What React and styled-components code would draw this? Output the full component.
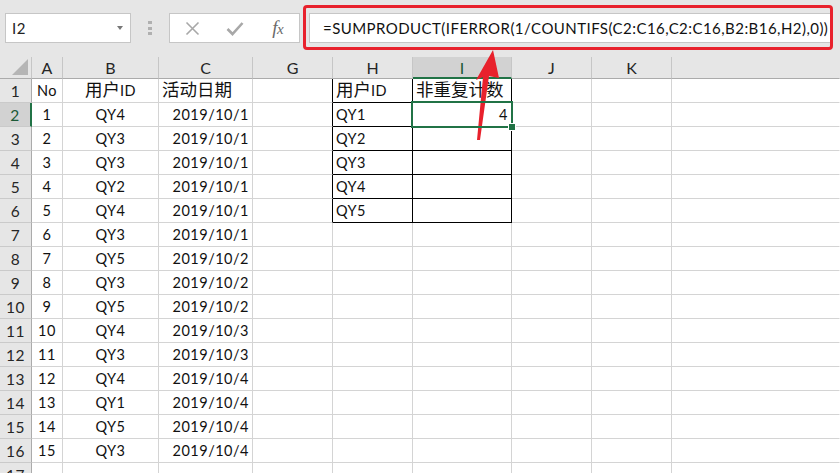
import React from "react";
import styled, { createGlobalStyle } from "styled-components";

const Global = createGlobalStyle`
  html, body { margin: 0; padding: 0; background: #ffffff; }
  body { overflow: hidden; }
`;

const LATIN = `Lato, "Noto Sans CJK SC", sans-serif`;
const GREEN = "#217346";

const Shell = styled.div`
  position: relative;
  width: 840px;
  height: 473px;
  overflow: hidden;
  background: #e6e6e6;
  font-family: ${LATIN};
  color: #000;
`;

const Toolbar = styled.div`
  display: flex;
  align-items: flex-start;
  height: 57px;
  box-sizing: border-box;
  padding-left: 5px;
`;

const NameBox = styled.div`
  margin-top: 13px;
  width: 126px;
  height: 30px;
  box-sizing: border-box;
  background: #fff;
  border: 1px solid #c6c6c6;
  display: flex;
  align-items: center;
  justify-content: space-between;
  padding: 0 7px 0 6px;
  font-size: 15px;
  letter-spacing: 0.6px;
  color: #222;
`;

const Caret = styled.span`
  width: 0;
  height: 0;
  border-left: 3.5px solid transparent;
  border-right: 3.5px solid transparent;
  border-top: 4px solid #777;
`;

const Grip = styled.div`
  margin: 21px 0 0 17px;
  display: flex;
  flex-direction: column;
  gap: 2.5px;
`;

const GripDot = styled.span`
  width: 3.5px;
  height: 3px;
  background: #b0b0b0;
`;

const ButtonBox = styled.div`
  margin: 13px 0 0 17.5px;
  width: 131px;
  height: 30px;
  box-sizing: border-box;
  background: #fff;
  border: 1px solid #c6c6c6;
  display: flex;
  align-items: center;
  padding-left: 1px;
`;

const ToolButton = styled.div`
  width: 45px;
  height: 28px;
  display: flex;
  align-items: center;
  justify-content: center;
`;

const Fx = styled.span`
  font-family: "Liberation Serif", "DejaVu Serif", serif;
  font-style: italic;
  color: #6a6a6a;
  font-size: 19px;
  letter-spacing: -0.5px;
  & > small {
    font-size: 15px;
  }
`;

const FormulaFrame = styled.div`
  margin: 5px 0 0 3px;
  width: 530px;
  height: 45px;
  box-sizing: border-box;
  border: 3px solid #e8222d;
  border-radius: 4px;
  padding: 5px 0 0 3px;
  display: flex;
  align-items: flex-start;
`;

const FormulaInput = styled.div`
  flex: 1;
  height: 30px;
  box-sizing: border-box;
  background: #fff;
  border: 1px solid #c6c6c6;
  border-right: none;
  padding-left: 13px;
  font-size: 15px;
  line-height: 28px;
  letter-spacing: 0.45px;
  color: #111;
  white-space: nowrap;
  overflow: hidden;
`;

const Sheet = styled.div`
  display: grid;
  grid-template-columns: 32px 31px 96px 94px 80px 80px 99px 80px 80px 1fr;
  grid-template-rows: 22px repeat(17, 24px);
  background: #fff;
`;

const Corner = styled.div`
  position: relative;
  background: #e6e6e6;
  border-right: 1px solid #c6c6c6;
  border-bottom: 1px solid #ababab;
`;

const CornerTri = styled.span`
  position: absolute;
  right: 3px;
  bottom: 3px;
  width: 0;
  height: 0;
  border-left: 16px solid transparent;
  border-bottom: 16px solid #b5b5b5;
`;

const ColHead = styled.div`
  background: ${(p) => (p.$sel ? "#d2d2d2" : "#e6e6e6")};
  border-right: 1px solid ${(p) => (p.$last ? "transparent" : "#c6c6c6")};
  border-bottom: ${(p) => (p.$sel ? `2px solid ${GREEN}` : "1px solid #ababab")};
  box-sizing: border-box;
  text-align: center;
  font-size: 16px;
  line-height: 21px;
  color: ${(p) => (p.$sel ? "#1c5a37" : "#262626")};
`;

const RowHead = styled.div`
  background: ${(p) => (p.$sel ? "#d2d2d2" : "#e6e6e6")};
  border-right: ${(p) => (p.$sel ? `2px solid ${GREEN}` : "1px solid #ababab")};
  border-bottom: 1px solid #cacaca;
  box-sizing: border-box;
  text-align: center;
  font-size: 15.5px;
  line-height: 24px;
  letter-spacing: 0.5px;
  color: ${(p) => (p.$sel ? "#1c5a37" : "#262626")};
`;

const Cell = styled.div`
  position: relative;
  z-index: ${(p) => (p.$active ? 2 : 0)};
  border-right: 1px solid ${(p) => p.$rb || "#d4d4d4"};
  border-bottom: 1px solid ${(p) => p.$bb || "#d4d4d4"};
  box-sizing: border-box;
  padding: 0 3px;
  font-size: 14.5px;
  letter-spacing: 0.5px;
  line-height: 24px;
  white-space: nowrap;
  text-align: ${(p) => p.$align || "left"};
  color: #111;
  ${(p) =>
    p.$active &&
    `
    &::after {
      content: "";
      position: absolute;
      top: -2px; left: -2px; right: -2px; bottom: -2px;
      border: 2px solid ${GREEN};
    }
    &::before {
      content: "";
      position: absolute;
      right: -5px; bottom: -5px;
      width: 6px; height: 6px;
      background: ${GREEN};
      border: 1px solid #fff;
      z-index: 3;
    }
  `}
`;

const Cjk = styled.span`
  font-family: "Noto Sans CJK SC", sans-serif;
  font-size: 17.5px;
  letter-spacing: 0;
  line-height: 1;
`;

const ArrowSvg = styled.svg`
  position: absolute;
  left: 460px;
  top: 45px;
  pointer-events: none;
`;

const COLS = ["A", "B", "C", "G", "H", "I", "J", "K", ""];

const ids = ["QY4", "QY3", "QY3", "QY2", "QY4", "QY3", "QY5", "QY3", "QY5", "QY4", "QY3", "QY4", "QY1", "QY5", "QY3"];
const dates = [1, 1, 1, 1, 1, 1, 2, 2, 2, 3, 3, 4, 4, 4, 4];

function buildRows() {
  const rows = [];
  rows.push({
    n: 1,
    cells: [
      { v: "No", align: "center" },
      { v: <><Cjk>用户</Cjk>ID</>, align: "center" },
      { v: <Cjk>活动日期</Cjk> },
      {},
      { v: <><Cjk>用户</Cjk>ID</> },
      { v: <Cjk>非重复计数</Cjk> },
      {},
      {},
      {},
    ],
  });
  for (let i = 0; i < 15; i++) {
    const r = i + 2;
    rows.push({
      n: r,
      cells: [
        { v: String(i + 1), align: "center" },
        { v: ids[i], align: "center" },
        { v: `2019/10/${dates[i]}`, align: "right" },
        {},
        r <= 6 ? { v: `QY${r - 1}` } : {},
        r === 2 ? { v: "4", align: "right", active: true } : {},
        {},
        {},
        {},
      ],
    });
  }
  rows.push({ n: 17, cells: Array.from({ length: 9 }, () => ({})) });
  return rows;
}

const rows = buildRows();

function borderFor(row, col) {
  const inBox = row >= 1 && row <= 6;
  let rb;
  let bb;
  if (inBox && (col === 3 || col === 4 || col === 5)) rb = "#000";
  if (inBox && (col === 4 || col === 5)) bb = "#000";
  if (col === 8) rb = "transparent";
  return { rb, bb };
}

export default function App() {
  return (
    <Shell>
      <Global />
      <Toolbar>
        <NameBox>
          <span>I2</span>
          <Caret />
        </NameBox>
        <Grip>
          <GripDot />
          <GripDot />
          <GripDot />
        </Grip>
        <ButtonBox>
          <ToolButton>
            <svg width="15" height="15" viewBox="0 0 15 15">
              <path d="M1.5 1.5 L13.5 13.5 M13.5 1.5 L1.5 13.5" stroke="#a8a8a8" strokeWidth="1.6" fill="none" />
            </svg>
          </ToolButton>
          <ToolButton>
            <svg width="18" height="15" viewBox="0 0 18 15">
              <path d="M1.5 8 L6.5 13 L16.5 2" stroke="#a8a8a8" strokeWidth="2.6" fill="none" />
            </svg>
          </ToolButton>
          <ToolButton>
            <Fx>
              f<small>x</small>
            </Fx>
          </ToolButton>
        </ButtonBox>
        <FormulaFrame>
          <FormulaInput>=SUMPRODUCT(IFERROR(1/COUNTIFS(C2:C16,C2:C16,B2:B16,H2),0))</FormulaInput>
        </FormulaFrame>
      </Toolbar>
      <Sheet>
        <Corner>
          <CornerTri />
        </Corner>
        {COLS.map((c, i) => (
          <ColHead key={i} $sel={c === "I"} $last={i === COLS.length - 1}>
            {c}
          </ColHead>
        ))}
        {rows.map((row) => (
          <React.Fragment key={row.n}>
            <RowHead $sel={row.n === 2}>{row.n}</RowHead>
            {row.cells.map((cell, ci) => {
              const { rb, bb } = borderFor(row.n, ci);
              return (
                <Cell key={ci} $align={cell.align} $rb={rb} $bb={bb} $active={cell.active}>
                  {cell.v}
                </Cell>
              );
            })}
          </React.Fragment>
        ))}
      </Sheet>
      <ArrowSvg width="50" height="100" viewBox="0 0 50 100">
        <polygon points="33,5 39,33 29,31 20,95 17,95 23,32 16,35" fill="#e8212c" />
      </ArrowSvg>
    </Shell>
  );
}
